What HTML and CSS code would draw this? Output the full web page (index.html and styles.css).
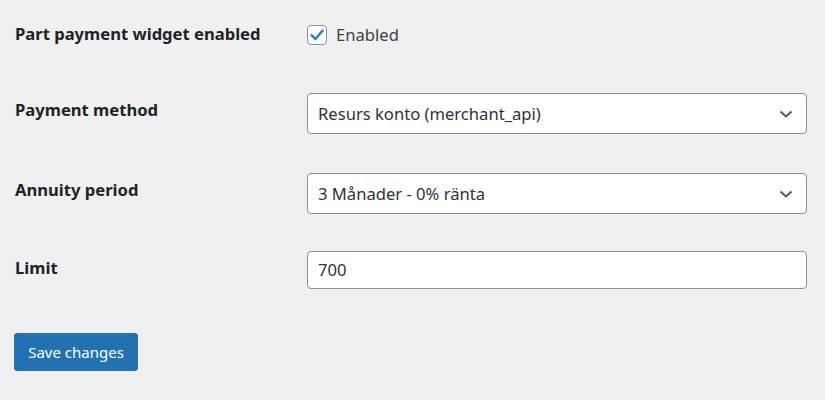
FILE: index.html
```html
<!DOCTYPE html>
<html lang="en">
<head>
<meta charset="utf-8">
<title>Part payment settings</title>
<link rel="stylesheet" href="styles.css">
</head>
<body>
<form class="settings">
  <div class="row row-check">
    <div class="label label-check">Part payment widget enabled</div>
    <label class="checkline">
      <span class="checkbox">
        <svg width="20" height="20" viewBox="0 0 20 20"><path d="M4.6 10.2 L8.4 14 L15.6 5.6" fill="none" stroke="#3582c4" stroke-width="2.6" stroke-linecap="round" stroke-linejoin="round"/></svg>
      </span>
      <span class="check-text">Enabled</span>
    </label>
  </div>
  <div class="row row-method">
    <div class="label">Payment method</div>
    <div class="select">
      <span class="select-value">Resurs konto (merchant_api)</span>
      <svg class="chevron" width="14" height="10" viewBox="0 0 14 10"><path d="M1.5 2.5 L7 7.5 L12.5 2.5" fill="none" stroke="#50575e" stroke-width="2"/></svg>
    </div>
  </div>
  <div class="row row-annuity">
    <div class="label">Annuity period</div>
    <div class="select">
      <span class="select-value">3 Månader - 0% ränta</span>
      <svg class="chevron" width="14" height="10" viewBox="0 0 14 10"><path d="M1.5 2.5 L7 7.5 L12.5 2.5" fill="none" stroke="#50575e" stroke-width="2"/></svg>
    </div>
  </div>
  <div class="row row-limit">
    <div class="label">Limit</div>
    <div class="input">700</div>
  </div>
  <div class="actions">
    <button type="button" class="button">Save changes</button>
  </div>
</form>
</body>
</html>
```
FILE: styles.css
```css
html, body {
  margin: 0;
  padding: 0;
  background: #f0f0f0;
}
body {
  font-family: "Noto Sans", "Open Sans", sans-serif;
  font-size: 16.6px;
  color: #1d2327;
}
.settings {
  display: flex;
  flex-direction: column;
  padding: 25px 0 0 15px;
}
.row {
  display: flex;
  align-items: flex-start;
}
.label {
  width: 292px;
  flex: none;
  font-weight: 700;
  line-height: 20px;
  margin-top: 7px;
  color: #1d2327;
}
.label-check {
  margin-top: -1px;
}
.row-method { margin-top: 48px; }
.row-annuity { margin-top: 39px; }
.row-limit { margin-top: 37px; }
.actions { margin-top: 44px; margin-left: -1px; }

.checkline {
  display: flex;
  align-items: center;
  gap: 9px;
  height: 20px;
}
.checkbox {
  width: 18px;
  height: 18px;
  border: 1px solid #8c8f94;
  border-radius: 4px;
  background: #fff;
  display: flex;
  align-items: center;
  justify-content: center;
}
.checkbox svg {
  display: block;
  margin: -1px;
}
.check-text {
  color: #3c434a;
  line-height: 20px;
  margin-top: 0;
}
.select {
  position: relative;
  box-sizing: border-box;
  width: 500px;
  height: 41px;
  border: 1px solid #8c8f94;
  border-radius: 4px;
  background: #fff;
  display: flex;
  align-items: center;
  padding-left: 10px;
  color: #2c3338;
}
.select-value {
  line-height: 20px;
}
.chevron {
  position: absolute;
  right: 13px;
  top: 15px;
}
.input {
  box-sizing: border-box;
  width: 500px;
  height: 38px;
  border: 1px solid #8c8f94;
  border-radius: 4px;
  background: #fff;
  display: flex;
  align-items: center;
  padding-left: 10px;
  color: #2c3338;
  line-height: 20px;
}
.button {
  font-family: "Noto Sans", "Open Sans", sans-serif;
  font-size: 15px;
  background: #2271b1;
  color: #fff;
  border: 1px solid #2271b1;
  border-radius: 3px;
  height: 38px;
  width: 124px;
  padding: 0;
  line-height: 20px;
  cursor: pointer;
}
```
